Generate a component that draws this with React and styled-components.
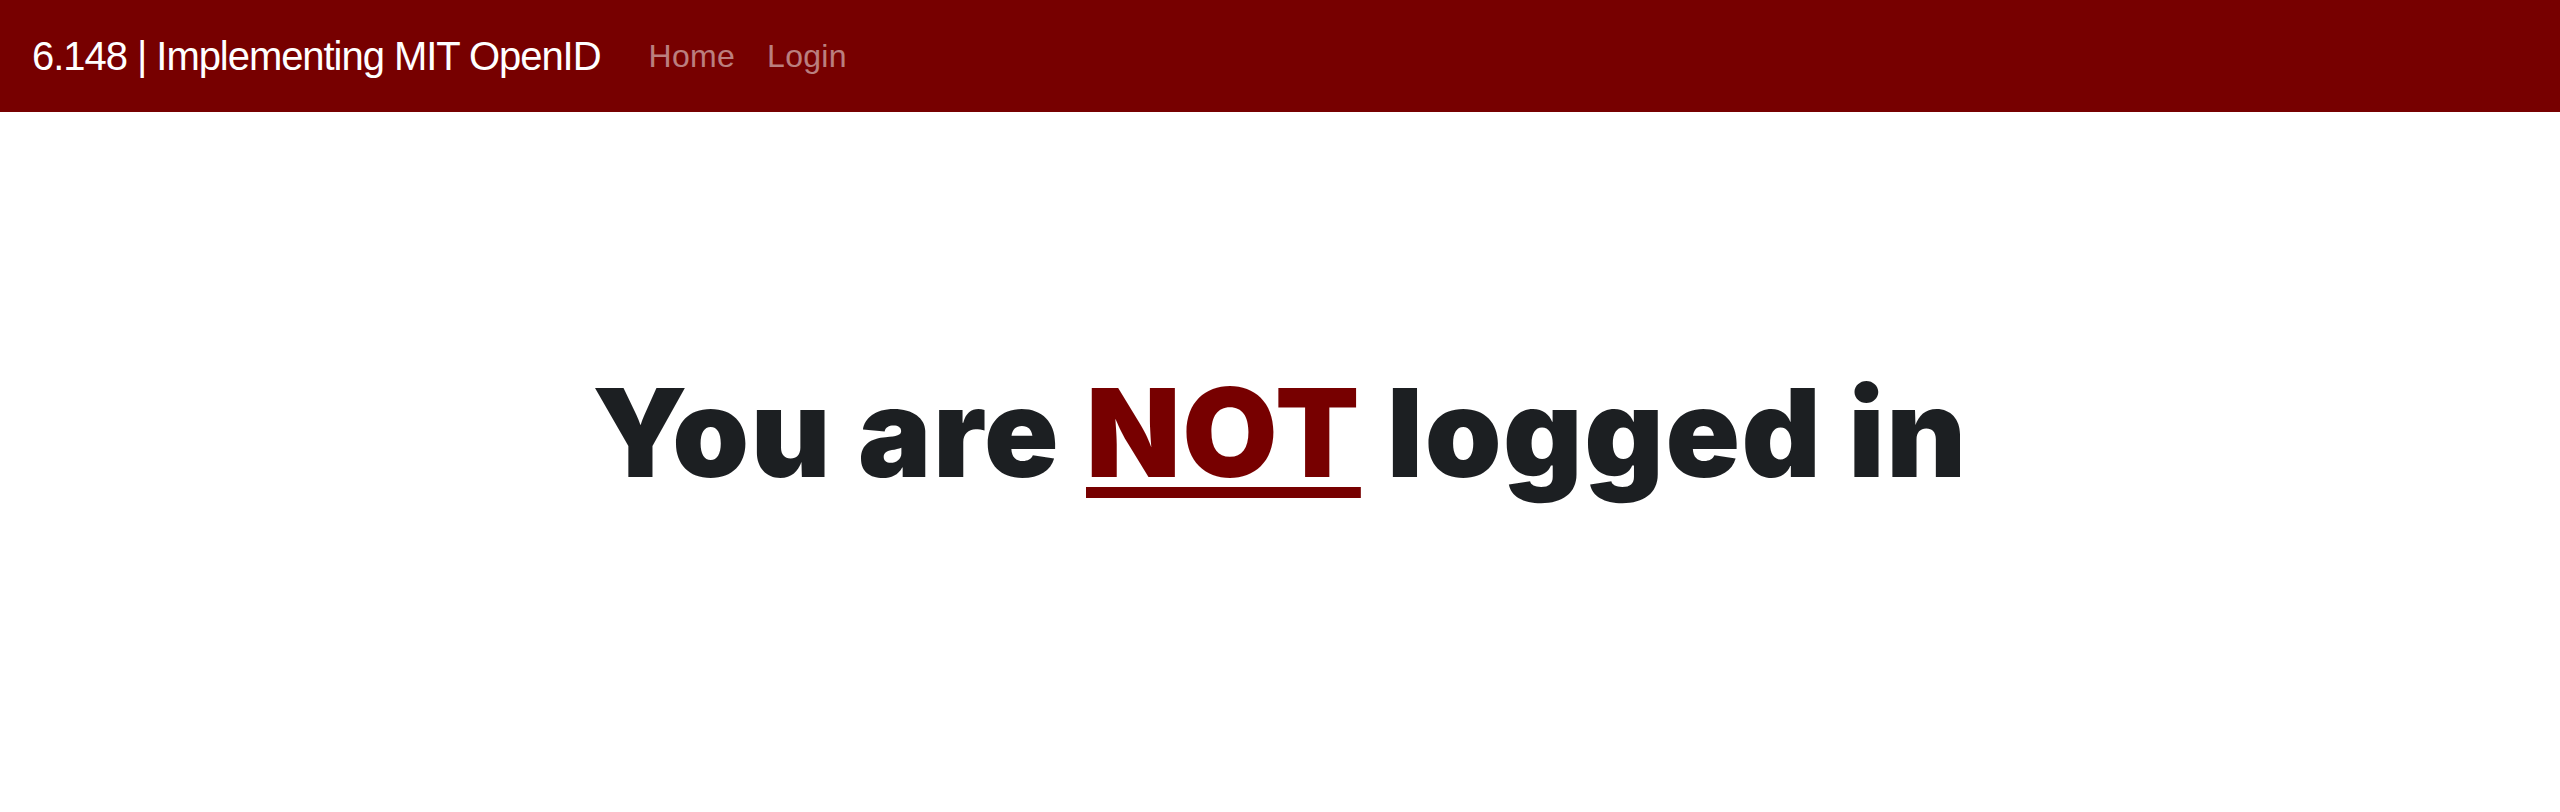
import React from "react";
import styled, { createGlobalStyle } from "styled-components";

const GlobalStyle = createGlobalStyle`
  html, body {
    margin: 0;
    padding: 0;
    background: #ffffff;
  }
  body {
    font-family: "Liberation Sans", Arial, sans-serif;
  }
  * { box-sizing: border-box; }
`;

const Navbar = styled.nav`
  display: flex;
  align-items: center;
  height: 112px;
  padding: 16px 32px;
  background: #770000;
`;

const Brand = styled.a`
  display: inline-block;
  padding: 10px 0;
  margin-right: 32px;
  font-family: "Liberation Sans", Arial, sans-serif;
  font-size: 40px;
  line-height: 60px;
  letter-spacing: -1.05px;
  color: #ffffff;
  text-decoration: none;
  white-space: nowrap;
`;

const NavList = styled.ul`
  display: flex;
  list-style: none;
  margin: 0;
  padding: 0;
`;

const NavLink = styled.a`
  display: block;
  padding: 16px 16px;
  font-family: "Liberation Sans", Arial, sans-serif;
  font-size: 32px;
  line-height: 48px;
  letter-spacing: 0.3px;
  color: rgba(255, 255, 255, 0.5);
  text-decoration: none;
`;

const Main = styled.main`
  display: flex;
  justify-content: center;
  padding-top: 247px;
`;

const Heading = styled.h1`
  margin: 0;
  font-family: Inter, "Noto Sans", sans-serif;
  font-weight: 900;
  font-size: 123px;
  line-height: 1.2;
  letter-spacing: 1.5px;
  color: #1c1f22;
  white-space: nowrap;
`;

const Emphasis = styled.span`
  color: #770000;
  text-decoration: underline;
  text-decoration-thickness: 11px;
  text-underline-offset: 10px;
`;

export default function App() {
  return (
    <>
      <GlobalStyle />
      <Navbar>
        <Brand href="#">6.148 | Implementing MIT OpenID</Brand>
        <NavList>
          <li><NavLink href="#">Home</NavLink></li>
          <li><NavLink href="#">Login</NavLink></li>
        </NavList>
      </Navbar>
      <Main>
        <Heading>
          You are <Emphasis>NOT</Emphasis> logged in
        </Heading>
      </Main>
    </>
  );
}
